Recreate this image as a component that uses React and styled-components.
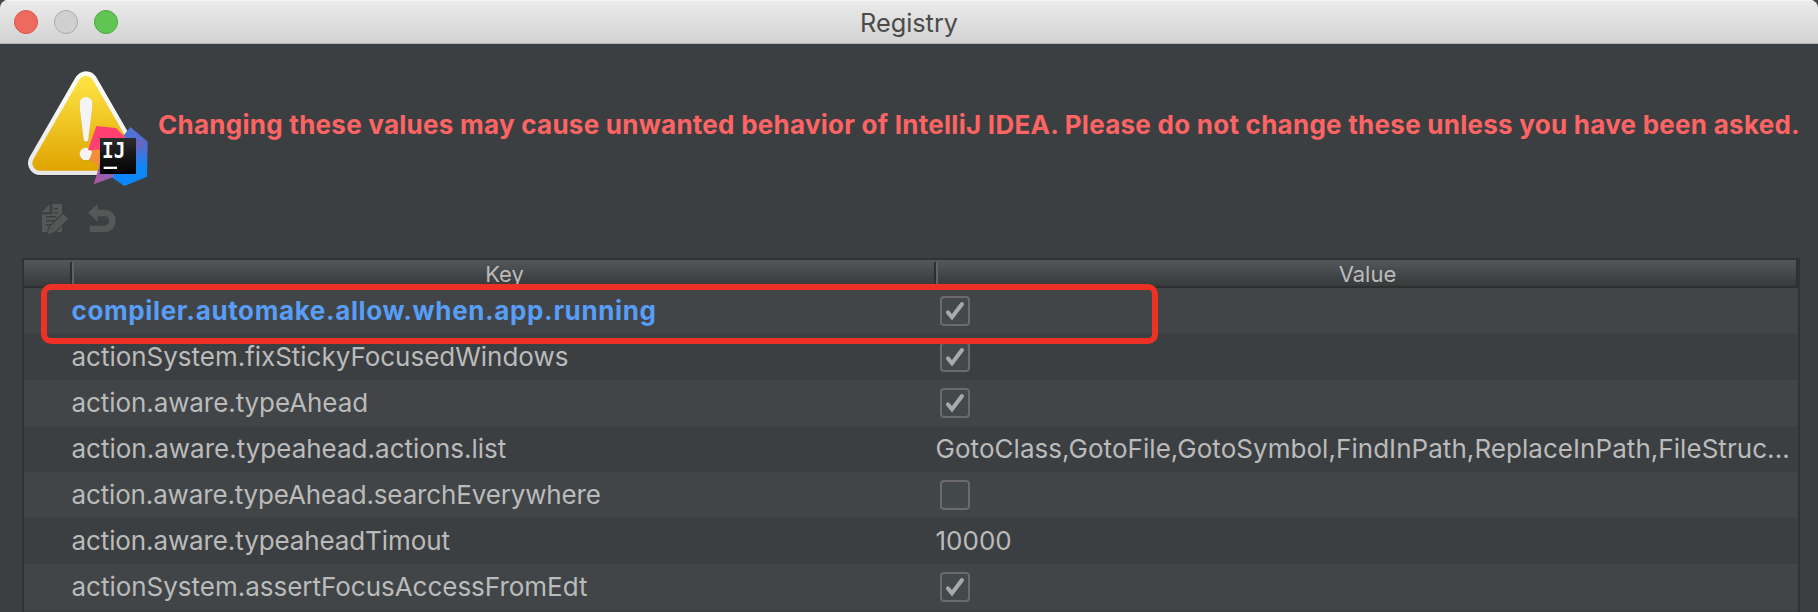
import React from 'react';
import styled, { createGlobalStyle } from 'styled-components';

const GlobalStyle = createGlobalStyle`
  *, *::before { box-sizing: border-box; }
  body {
    margin: 0;
    overflow: hidden;
    background: #4a4542;
    font-family: Inter, "Liberation Sans", sans-serif;
  }
`;

const Window = styled.div`
  display: flex;
  flex-direction: column;
  height: 612px;
  overflow: hidden;
  border-radius: 8px 8px 0 0;
  background: #3c3f41;
  color: #bbbbbb;
`;

const TitleBar = styled.header`
  display: grid;
  grid-template-columns: 1fr auto 1fr;
  align-items: center;
  flex: none;
  height: 44px;
  padding: 0 14px;
  background: linear-gradient(#ebebeb, #d2d2d2);
  box-shadow: inset 0 1px 0 #f6f6f6, inset 0 -1px 0 #b4b4b4;
`;

const Lights = styled.div`
  display: flex;
  gap: 16px;
`;

const Light = styled.span`
  width: 24px;
  height: 24px;
  border: 1px solid ${(p) => p.$edge};
  border-radius: 50%;
  background: ${(p) => p.$fill};
`;

const Title = styled.h1`
  margin: 0;
  padding-top: 2px;
  font-size: 25.3px;
  font-weight: 400;
  line-height: 30px;
  color: #4b4b4b;
`;

const Banner = styled.section`
  display: flex;
  flex: none;
  gap: 10px;
  height: 146px;
  padding: 26px 0 0 27px;
`;

const Warning = styled.p`
  margin: 0;
  padding-top: 39px;
  font-size: 26px;
  font-weight: 700;
  line-height: 31px;
  letter-spacing: 0.26px;
  white-space: nowrap;
  color: #ff6464;
`;

const Toolbar = styled.nav`
  display: flex;
  flex: none;
  align-items: flex-start;
  gap: 20px;
  height: 68px;
  padding: 14px 0 0 42px;
`;

const Table = styled.div`
  position: relative;
  flex: 1;
  margin: 0 18px 0 22px;
  border: 2px solid #323232;
  border-bottom: 0;
`;

const HeaderRow = styled.div`
  display: grid;
  grid-template-columns: 46px 864px 1fr;
  height: 28px;
  border-bottom: 2px solid #2e2f30;
  border-right: 2px solid #2e2f30;
  background: linear-gradient(#52575a, #383a3b) padding-box;
`;

const HeaderCell = styled.div`
  display: flex;
  align-items: center;
  justify-content: center;
  position: relative;
  padding: 1px 0 0 5px;
  font-size: 22px;
  line-height: 24px;

  & + &::before {
    content: "";
    position: absolute;
    left: 0;
    top: 2px;
    width: 4px;
    height: 22px;
    border-left: 2px solid #2b2d2e;
    border-right: 2px solid #5f6365;
  }
`;

const Row = styled.div`
  display: grid;
  grid-template-columns: 47.5px 864px 1fr;
  align-items: center;
  height: 46px;

  &:nth-child(even) { background: #414547; }
`;

const Cell = styled.div`
  overflow: hidden;
  font-size: 26px;
  line-height: 46px;
  white-space: nowrap;
  font-weight: ${(p) => (p.$changed ? 700 : 400)};
  color: ${(p) => (p.$changed ? '#589df6' : 'inherit')};
  letter-spacing: ${(p) => p.$track || 0}px;
`;

const Box = styled.span`
  display: block;
  width: 30px;
  height: 30px;
  margin-left: 4.5px;
  border: 2px solid #6b6b6b;
  border-radius: 4px;
  background: #43494a;

  svg { display: block; }
`;

const Highlight = styled.div`
  position: absolute;
  left: 17px;
  top: 24px;
  width: 1117px;
  height: 60px;
  border: 6px solid #ee3124;
  border-radius: 10px;
`;

function Checkbox({ checked }) {
  return (
    <Box>
      {checked && (
        <svg width="26" height="26" viewBox="0 0 26 26" fill="none">
          <path d="M6 14.4L10 19.3L20 6" stroke="#a9a9a9" strokeWidth="4" strokeLinecap="round" />
        </svg>
      )}
    </Box>
  );
}

function WarningIcon() {
  return (
    <svg width="121" height="117" viewBox="51 30 363 351">
      <defs>
        <linearGradient id="yellow" gradientUnits="userSpaceOnUse" x1="0" y1="45" x2="0" y2="333">
          <stop offset="0" stopColor="#ffe646" />
          <stop offset="1" stopColor="#dfa400" />
        </linearGradient>
        <linearGradient id="rim" gradientUnits="userSpaceOnUse" x1="0" y1="33" x2="0" y2="345">
          <stop offset="0" stopColor="#ffffff" />
          <stop offset="1" stopColor="#e6e6e6" />
        </linearGradient>
        <linearGradient id="blue" gradientUnits="userSpaceOnUse" x1="360" y1="201" x2="360" y2="360">
          <stop offset="0" stopColor="#4f74d8" />
          <stop offset="0.4" stopColor="#526fd0" />
          <stop offset="0.75" stopColor="#0d86fb" />
        </linearGradient>
        <linearGradient id="violet" gradientUnits="userSpaceOnUse" x1="251" y1="360" x2="315" y2="340">
          <stop offset="0" stopColor="#b0559c" />
          <stop offset="1" stopColor="#8269b8" />
        </linearGradient>
        <linearGradient id="orange" gradientUnits="userSpaceOnUse" x1="240" y1="275" x2="275" y2="325">
          <stop offset="0" stopColor="#f3902f" />
          <stop offset="1" stopColor="#ef8b4a" />
        </linearGradient>
        <linearGradient id="black" x1="0" y1="0" x2="0" y2="1">
          <stop offset="0" stopColor="#2c2c2c" />
          <stop offset="1" stopColor="#000000" />
        </linearGradient>
      </defs>
      <path d="M228 71L90 311H366Z" fill="#2b2d2e" stroke="#2b2d2e" strokeWidth="73" strokeLinejoin="round" opacity="0.5" />
      <path d="M228 70L90 309H366Z" fill="url(#rim)" stroke="url(#rim)" strokeWidth="72" strokeLinejoin="round" />
      <path d="M228 70L90 309H366Z" fill="url(#yellow)" stroke="url(#yellow)" strokeWidth="46" strokeLinejoin="round" />
      <g fill="#b58a10" opacity="0.5">
        <path d="M209 133a19 19 0 0 1 38 0C247 158 239 205 235 242Q234 248 228 248T221 242C217 205 209 158 209 133Z" />
        <circle cx="228" cy="285" r="19" />
      </g>
      <g fill="#f4f4f4">
        <path d="M209 130a19 19 0 0 1 38 0C247 155 239 202 235 239Q234 245 228 245T221 239C217 202 209 155 209 130Z" />
        <circle cx="228" cy="282" r="19" />
      </g>
      <path d="M361 201L413 245L411 350L343 378L303 350L330 240Z" fill="url(#blue)" />
      <path d="M413 245L375 234V280Z" fill="#6c62bd" opacity="0.75" />
      <path d="M259 198L318 204L350 236L300 280L234 270Z" fill="#ff4071" />
      <path d="M249 269H285V330L238 299Z" fill="url(#orange)" />
      <path d="M270 312L251 373L313 350V325Z" fill="url(#violet)" />
      <rect x="270" y="234" width="108" height="108" fill="url(#black)" />
      <text
        x="276"
        y="294"
        fill="#ffffff"
        fontFamily="'DejaVu Sans Mono', monospace"
        fontWeight="700"
        fontSize="62"
        textLength="70"
        lengthAdjust="spacingAndGlyphs"
      >
        IJ
      </text>
      <rect x="281" y="320" width="40" height="7" fill="#ffffff" />
    </svg>
  );
}

function EditIcon() {
  return (
    <svg width="26" height="30" viewBox="0 0 78 90">
      <g fill="#565857">
        <path d="M0 25L23 0V25Z" />
        <path d="M31 0H60V84H0V31H31Z" />
      </g>
      <path d="M37 14H48M37 26H48M12 38H43M12 50H40M12 62H30" stroke="#3c3f41" strokeWidth="4.5" />
      <path d="M64 30L78 44L38 84L18 90L22 70Z" fill="#565857" stroke="#3c3f41" strokeWidth="7" paintOrder="stroke" />
      <path d="M23 68L40 85" stroke="#3c3f41" strokeWidth="2" />
    </svg>
  );
}

function RevertIcon() {
  return (
    <svg width="28" height="28" viewBox="0 0 84 84">
      <path
        d="M0 26L29 0V17H50C70 17 83 32 83 50S70 84 50 84H5V65H50C58 65 63 59 63 51S58 37 50 37H29V53Z"
        fill="#565857"
      />
    </svg>
  );
}

const entries = [
  { key: 'compiler.automake.allow.when.app.running', value: true, changed: true, track: 0.62 },
  { key: 'actionSystem.fixStickyFocusedWindows', value: true, track: -0.02 },
  { key: 'action.aware.typeAhead', value: true, track: -0.08 },
  {
    key: 'action.aware.typeahead.actions.list',
    value: 'GotoClass,GotoFile,GotoSymbol,FindInPath,ReplaceInPath,FileStruc...',
    valueTrack: 0.05,
  },
  { key: 'action.aware.typeAhead.searchEverywhere', value: false, track: -0.15 },
  { key: 'action.aware.typeaheadTimout', value: '10000', track: -0.11 },
  { key: 'actionSystem.assertFocusAccessFromEdt', value: true, track: -0.02 },
];

export default function App() {
  return (
    <>
      <GlobalStyle />
      <Window>
        <TitleBar>
          <Lights>
            <Light $fill="#ee6a5f" $edge="#d9534a" />
            <Light $fill="#d0d0d0" $edge="#aaaaaa" />
            <Light $fill="#61c554" $edge="#4aa73c" />
          </Lights>
          <Title>Registry</Title>
        </TitleBar>
        <Banner>
          <WarningIcon />
          <Warning>
            Changing these values may cause unwanted behavior of IntelliJ IDEA. Please do not change these unless you
            have been asked.
          </Warning>
        </Banner>
        <Toolbar>
          <EditIcon />
          <RevertIcon />
        </Toolbar>
        <Table>
          <HeaderRow>
            <HeaderCell />
            <HeaderCell>Key</HeaderCell>
            <HeaderCell>Value</HeaderCell>
          </HeaderRow>
          {entries.map((e) => (
            <Row key={e.key}>
              <span />
              <Cell $changed={e.changed} $track={e.track}>{e.key}</Cell>
              {typeof e.value === 'boolean' ? (
                <Checkbox checked={e.value} />
              ) : (
                <Cell $track={e.valueTrack}>{e.value}</Cell>
              )}
            </Row>
          ))}
          <Highlight />
        </Table>
      </Window>
    </>
  );
}
